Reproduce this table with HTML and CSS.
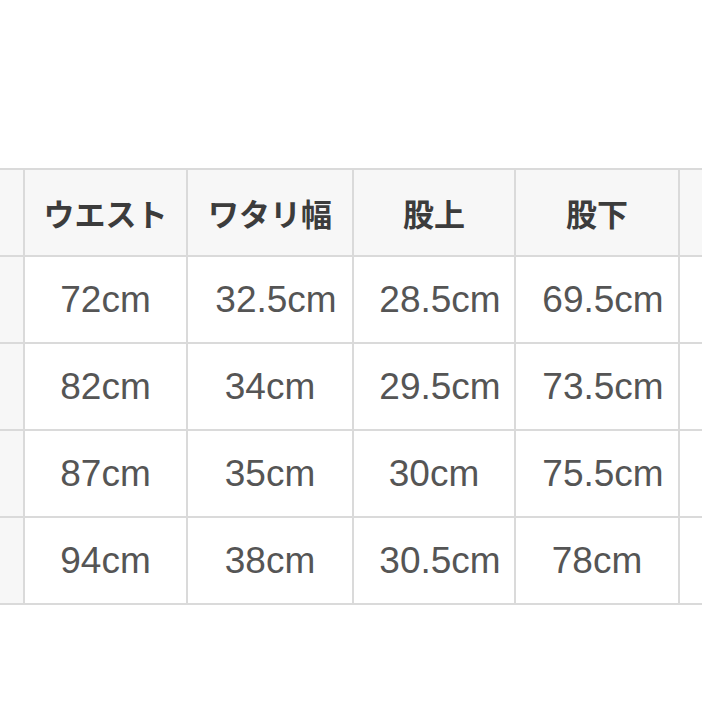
FILE: index.html
```html
<!DOCTYPE html>
<html lang="ja">
<head>
<meta charset="utf-8">
<link rel="stylesheet" href="styles.css">
</head>
<body>
<div class="sheet">
  <div class="grid">
    <div class="cell side"></div>
    <div class="cell head">ウエスト</div>
    <div class="cell head">ワタリ幅</div>
    <div class="cell head">股上</div>
    <div class="cell head">股下</div>
    <div class="cell head edge"></div>

    <div class="cell side"></div>
    <div class="cell">72cm</div>
    <div class="cell shift">32.5cm</div>
    <div class="cell shift">28.5cm</div>
    <div class="cell shift">69.5cm</div>
    <div class="cell edge"></div>

    <div class="cell side"></div>
    <div class="cell">82cm</div>
    <div class="cell">34cm</div>
    <div class="cell shift">29.5cm</div>
    <div class="cell shift">73.5cm</div>
    <div class="cell edge"></div>

    <div class="cell side"></div>
    <div class="cell">87cm</div>
    <div class="cell">35cm</div>
    <div class="cell">30cm</div>
    <div class="cell shift">75.5cm</div>
    <div class="cell edge"></div>

    <div class="cell side"></div>
    <div class="cell">94cm</div>
    <div class="cell">38cm</div>
    <div class="cell shift">30.5cm</div>
    <div class="cell">78cm</div>
    <div class="cell edge"></div>
  </div>
</div>
</body>
</html>
```

FILE: styles.css
```css
html, body {
  margin: 0;
  padding: 0;
  background: #ffffff;
  overflow: hidden;
}

.sheet {
  width: 702px;
  height: 702px;
  padding-top: 168px;
  box-sizing: border-box;
}

.grid {
  display: grid;
  grid-template-columns: 23px 161px 164px 160px 162px 1fr;
  grid-auto-rows: 85px;
  gap: 2px;
  padding: 2px 0;
  background: #dadada;
  width: 702px;
}

.cell {
  background: #ffffff;
  display: flex;
  align-items: center;
  justify-content: center;
  font-family: "Liberation Sans", "Noto Sans CJK JP", sans-serif;
  font-size: 37px;
  color: #555555;
  white-space: nowrap;
}

.cell.shift {
  padding-left: 12px;
}

.cell.side {
  background: #f7f7f7;
}

.cell.head {
  background: #f7f7f7;
  font-family: "Noto Sans CJK JP", sans-serif;
  font-weight: 700;
  font-size: 31px;
  color: #3c3c3c;
}
```
